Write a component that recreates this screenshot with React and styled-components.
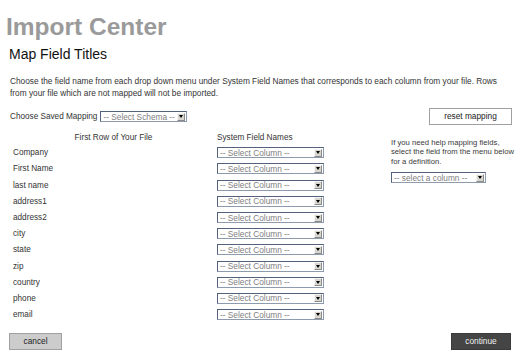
import React from "react";
import styled, { createGlobalStyle } from "styled-components";

const GlobalStyle = createGlobalStyle`
  body {
    margin: 0;
    background: #fff;
    font-family: "Liberation Sans", Arial, sans-serif;
  }
`;

const Page = styled.div`
  width: 530px;
  height: 359px;
  box-sizing: border-box;
  padding: 13px 0 0 10px;
  overflow: hidden;
`;

const Title = styled.h1`
  margin: 0 0 0 -4px;
  font-size: 24.5px;
  line-height: 28px;
  font-weight: bold;
  color: #9a9a9a;
`;

const SubTitle = styled.h2`
  margin: 4.5px 0 0 -1px;
  font-size: 14px;
  line-height: 16px;
  font-weight: normal;
  color: #111;
`;

const Intro = styled.p`
  margin: 13px 0 0;
  width: 500px;
  font-size: 8.3px;
  line-height: 12px;
  color: #333;
`;

const MappingBar = styled.div`
  display: flex;
  align-items: center;
  height: 17px;
  margin-top: 9.5px;
  padding-right: 18px;
`;

const Label = styled.span`
  font-size: 8.2px;
  color: #333;
  white-space: nowrap;
`;

const SelectBox = styled.div`
  display: flex;
  align-items: center;
  box-sizing: border-box;
  width: ${(p) => p.$w}px;
  height: ${(p) => p.$h}px;
  margin-left: ${(p) => p.$ml || 0}px;
  padding: 0 1px 0 2px;
  border: 1px solid;
  border-color: #55627d #8d9ab0 #8d9ab0 #55627d;
  background: #fff;
`;

const SelectText = styled.span`
  flex: 1;
  font-size: 8.3px;
  line-height: 8px;
  color: #808080;
  white-space: nowrap;
`;

const Arrow = styled.span`
  display: flex;
  align-items: center;
  justify-content: center;
  box-sizing: border-box;
  width: 8px;
  height: ${(p) => p.$h}px;
  background: #d9d6cf;
  border: 1px solid;
  border-color: #f6f6f6 #8a8a8a #8a8a8a #f6f6f6;

  &::after {
    content: "";
    border-left: 2.5px solid transparent;
    border-right: 2.5px solid transparent;
    border-top: 3px solid #000;
  }
`;

const Button = styled.button`
  box-sizing: border-box;
  width: ${(p) => p.$w}px;
  height: ${(p) => p.$h}px;
  padding: 0;
  margin-left: ${(p) => (p.$push ? "auto" : "0")};
  font-family: "Liberation Sans", Arial, sans-serif;
  font-size: 8.3px;
  line-height: 1;
  color: ${(p) => (p.$dark ? "#f0f0f0" : "#222")};
  background: ${(p) => (p.$dark ? "#454545" : p.$grey ? "#cccccc" : "#fff")};
  border: 1px solid ${(p) => (p.$dark ? "#3a3a3a" : "#a0a0a0")};
  cursor: pointer;
`;

const Body = styled.div`
  display: flex;
  margin-top: 5.7px;
`;

const MapGrid = styled.div`
  display: grid;
  grid-template-columns: 207px 107px;
  grid-template-rows: 14px repeat(11, 16.2px);
  align-items: center;
`;

const ColHead = styled.div`
  font-size: 8.2px;
  color: #333;
  text-align: ${(p) => (p.$center ? "center" : "left")};
`;

const FieldName = styled.div`
  padding-left: 3px;
  font-size: 8.2px;
  color: #333;
`;

const HelpPanel = styled.div`
  margin-left: 67px;
  padding-top: 7px;
  width: 130px;
`;

const HelpText = styled.p`
  margin: 0 0 5px;
  font-size: 7.7px;
  line-height: 9.8px;
  color: #3a3a3a;
`;

const Footer = styled.div`
  display: flex;
  margin-top: 10px;
  margin-left: -1px;
  padding-right: 19px;
`;

const Select = ({ text, w, h, ml }) => (
  <SelectBox $w={w} $h={h} $ml={ml}>
    <SelectText>{text}</SelectText>
    <Arrow $h={h - 3} />
  </SelectBox>
);

const fields = [
  "Company",
  "First Name",
  "last name",
  "address1",
  "address2",
  "city",
  "state",
  "zip",
  "country",
  "phone",
  "email",
];

const App = () => (
  <>
    <GlobalStyle />
    <Page>
      <Title>Import Center</Title>
      <SubTitle>Map Field Titles</SubTitle>
      <Intro>
        Choose the field name from each drop down menu under System Field Names that corresponds
        to each column from your file. Rows from your file which are not mapped will not be
        imported.
      </Intro>
      <MappingBar>
        <Label>Choose Saved Mapping</Label>
        <Select text="-- Select Schema --" w={87} h={11} ml={3} />
        <Button $w={83} $h={17} $push>
          reset mapping
        </Button>
      </MappingBar>
      <Body>
        <MapGrid>
          <ColHead $center>First Row of Your File</ColHead>
          <ColHead>System Field Names</ColHead>
          {fields.map((f) => (
            <React.Fragment key={f}>
              <FieldName>{f}</FieldName>
              <Select text="-- Select Column --" w={107} h={11} />
            </React.Fragment>
          ))}
        </MapGrid>
        <HelpPanel>
          <HelpText>
            If you need help mapping fields,
            <br />
            select the field from the menu below
            <br />
            for a definition.
          </HelpText>
          <Select text="-- select a column --" w={95} h={11} />
        </HelpPanel>
      </Body>
      <Footer>
        <Button $w={53} $h={17} $grey>
          cancel
        </Button>
        <Button $w={60} $h={17} $dark $push>
          continue
        </Button>
      </Footer>
    </Page>
  </>
);

export default App;
